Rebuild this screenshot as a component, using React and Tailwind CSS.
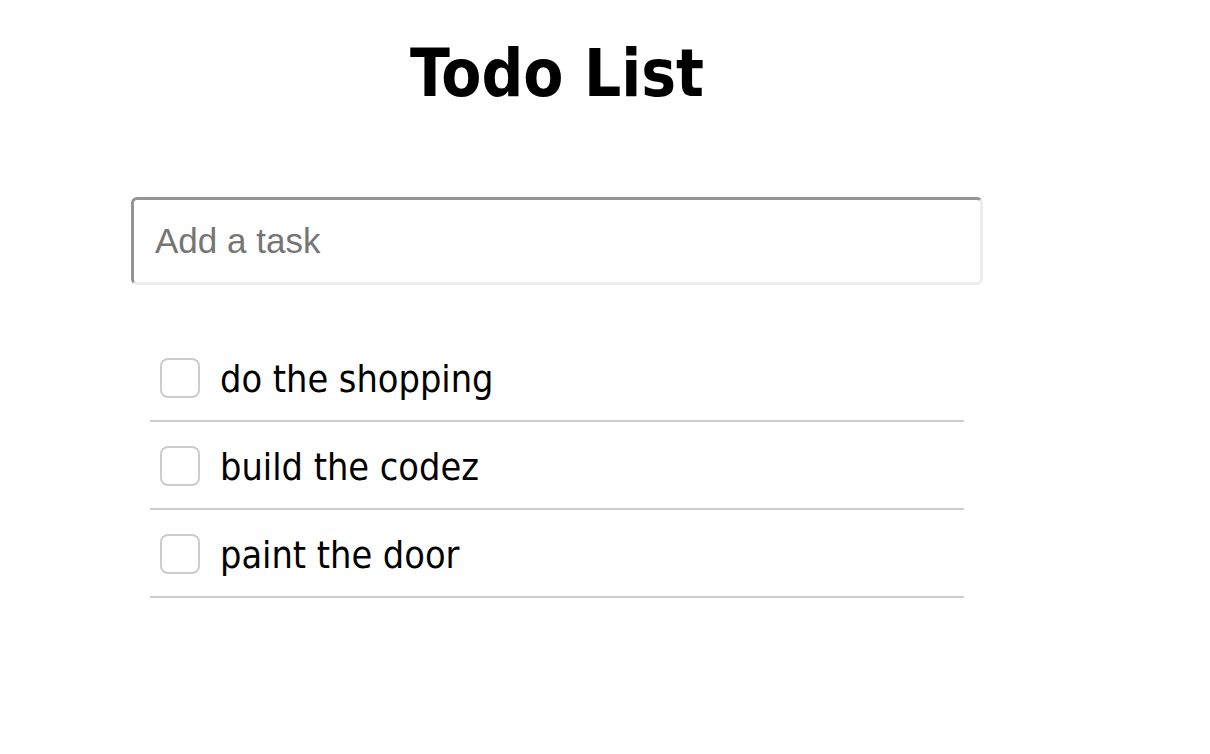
import { useState } from 'react'

const INITIAL_TODOS = [
  { id: 1, text: 'do the shopping', done: false },
  { id: 2, text: 'build the codez', done: false },
  { id: 3, text: 'paint the door', done: false },
]

export default function App() {
  const [todos, setTodos] = useState(INITIAL_TODOS)
  const [draft, setDraft] = useState('')

  const toggle = (id) =>
    setTodos((list) => list.map((t) => (t.id === id ? { ...t, done: !t.done } : t)))

  return (
    <div className="min-h-[754px] bg-white font-['DejaVu_Sans_Condensed','DejaVu_Sans',sans-serif] text-black">
      <div className="ml-[131px] w-[852px] pt-[34px]">
        <h1 className="text-center text-[65px] font-bold leading-[80px]">Todo List</h1>

        <input
          type="text"
          value={draft}
          onChange={(e) => setDraft(e.target.value)}
          placeholder="Add a task"
          className="mt-[83px] block h-[88px] w-full rounded-[6px] border-[3px] border-t-[#949494] border-l-[#949494] border-r-[#ededed] border-b-[#ededed] px-[21px] font-['Liberation_Sans',Arial,sans-serif] text-[35px] outline-none placeholder:text-[#757575]"
        />

        <ul className="mx-[19px] mt-[49px]">
          {todos.map((todo) => (
            <li
              key={todo.id}
              className="flex h-[88px] items-center gap-[20px] border-b-2 border-[#cccccc] pl-[10px]"
            >
              <button
                type="button"
                onClick={() => toggle(todo.id)}
                className="mt-[2px] h-[40px] w-[40px] shrink-0 rounded-[8px] border-2 border-[#cccccc] bg-white"
              />
              <span className="pt-[5px] text-[37.5px] leading-none">{todo.text}</span>
            </li>
          ))}
        </ul>
      </div>
    </div>
  )
}
